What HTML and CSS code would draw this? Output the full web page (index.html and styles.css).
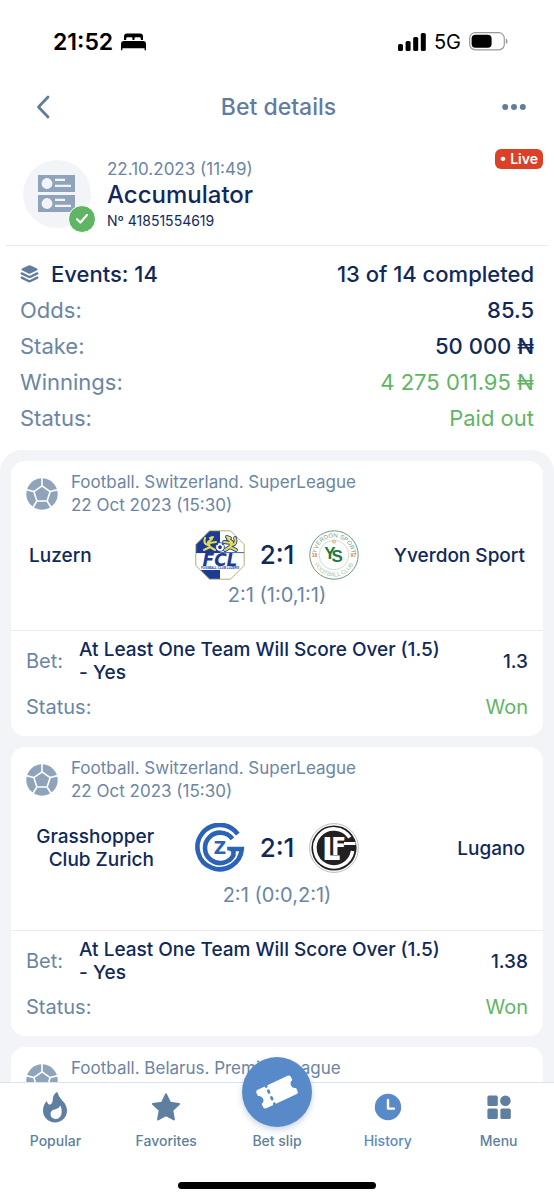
FILE: index.html
```html
<!DOCTYPE html>
<html lang="en">
<head>
  <meta charset="UTF-8" />
  <meta name="viewport" content="width=device-width, initial-scale=1.0" />
  <title>Bet details</title>
  <link rel="stylesheet" href="styles.css">
</head>
<body>
  <svg class="sprite" aria-hidden="true">
    <symbol id="ball" viewBox="0 0 32 32">
      <circle cx="16" cy="16" r="15.7" fill="#8fa4ba" />
      <g fill="none" stroke="#fff" stroke-width="1.6" stroke-linejoin="round">
        <path d="M16 7.8 24.2 13.6 21.1 23H10.9L7.8 13.6Z" />
        <path d="M16 7.8V0M24.2 13.6 32 11.6M21.1 23 25.4 30M10.9 23 6.6 30M7.8 13.6 0 11.6" />
      </g>
    </symbol>
  </svg>

  <div class="app">
    <div class="statusbar">
      <div class="statusbar-left">
        <span class="clock">21:52</span>
        <svg width="25" height="18" viewBox="0 0 25 18">
          <path d="M3 7V3.5A3 3 0 0 1 6 .5H19A3 3 0 0 1 22 3.5V7H19.8V5.6Q19.8 4.3 18.5 4.3H14.8Q13.5 4.3 13.5 5.6V7H11.5V5.6Q11.5 4.3 10.2 4.3H6.5Q5.2 4.3 5.2 5.6V7Z" />
          <path d="M3 8H22Q25 8 25 11V17.2H23.6V15.3H1.4V17.2H0V11Q0 8 3 8Z" />
        </svg>
      </div>
      <div class="statusbar-right">
        <svg width="28" height="18" viewBox="0 0 28 18">
          <rect x="0" y="11" width="5" height="7" rx="1.6" />
          <rect x="7.6" y="8" width="5" height="10" rx="1.6" />
          <rect x="15.2" y="4" width="5" height="14" rx="1.6" />
          <rect x="22.8" y="0" width="5" height="18" rx="1.6" />
        </svg>
        <span class="network">5G</span>
        <svg width="39" height="19" viewBox="0 0 39 19">
          <rect x=".7" y=".7" width="34.6" height="17.2" rx="5.6" fill="none" stroke="#999" stroke-width="1.2" />
          <rect x="2.6" y="2.8" width="20" height="13" rx="4" />
          <path d="M36.8 6.4Q38.6 7.2 38.6 9.2T36.8 12Z" fill="#999" />
        </svg>
      </div>
    </div>

    <header class="topbar">
      <button class="icon-btn" type="button" aria-label="Back">
        <svg width="14" height="24" viewBox="0 0 14 24"><path d="M12 2 2.5 12 12 22" fill="none" stroke="#5f7d9f" stroke-width="2.8" stroke-linecap="round" stroke-linejoin="round" /></svg>
      </button>
      <h1>Bet details</h1>
      <button class="icon-btn" type="button" aria-label="More">
        <svg width="24" height="6" viewBox="0 0 24 6" fill="#5f7d9f"><circle cx="3.2" cy="3" r="3" /><circle cx="12" cy="3" r="3" /><circle cx="20.8" cy="3" r="3" /></svg>
      </button>
    </header>

    <main>
      <section class="coupon">
        <div class="avatar">
          <svg width="38" height="38" viewBox="0 0 38 38">
            <path d="M0 0H37V17H0ZM0 20H37V37H0Z" fill="#8fa4ba" />
            <circle cx="9" cy="8.5" r="5.4" fill="#f3f4f8" />
            <circle cx="9" cy="28.5" r="5.4" fill="#f3f4f8" />
            <path d="M17 4.8H27M17 10.8H33M17 24.8H27M17 30.8H33" stroke="#f3f4f8" stroke-width="2.2" />
          </svg>
          <span class="check">
            <svg width="12" height="10" viewBox="0 0 12 10"><path d="M1 5.2 4.4 8.5 11 1" fill="none" stroke="#fff" stroke-width="2.2" stroke-linecap="round" stroke-linejoin="round" /></svg>
          </span>
        </div>
        <div class="coupon-text">
          <span class="coupon-date">22.10.2023 (11:49)</span>
          <h2>Accumulator</h2>
          <span class="coupon-number">Nº 41851554619</span>
        </div>
        <span class="live">• Live</span>
      </section>

      <dl class="totals">
        <div class="total total-events">
          <dt>
            <svg width="19" height="18" viewBox="0 0 18 18">
              <path d="M8 .4Q9 0 10 .4L16.5 3.5Q17.8 4.4 16.5 5.3L10 8.5Q9 9 8 8.5L1.5 5.3Q.2 4.4 1.5 3.5Z" fill="#5f7d9f" />
              <path d="M1.2 8.4 8 11.8Q9 12.2 10 11.8L16.8 8.4M1.2 12.6 8 16Q9 16.5 10 16L16.8 12.6" fill="none" stroke="#5f7d9f" stroke-width="2.3" stroke-linecap="round" />
            </svg>
            Events: 14
          </dt>
          <dd>13 of 14 completed</dd>
        </div>
        <div class="total"><dt>Odds:</dt><dd>85.5</dd></div>
        <div class="total"><dt>Stake:</dt><dd>50 000 ₦</dd></div>
        <div class="total"><dt>Winnings:</dt><dd class="good">4 275 011.95 ₦</dd></div>
        <div class="total"><dt>Status:</dt><dd class="good">Paid out</dd></div>
      </dl>

      <section class="events">
        <article class="card">
          <div class="league">
            <svg width="32" height="32"><use href="#ball" /></svg>
            <p>Football. Switzerland. SuperLeague<br>22 Oct 2023 (15:30)</p>
          </div>
          <div class="match">
            <span class="team home">Luzern</span>
            <svg class="logo" viewBox="0 0 50 50">
              <path d="M14.5 .8H35.5L49.2 14.5V35.5L35.5 49.2H14.5L.8 35.5V14.5Z" fill="#fff" />
              <path d="M14.5 1H25V23H1V14.5ZM5.5 40H25V49H14.5Z" fill="#1d3a94" />
              <path d="M14.5 .8H35.5L49.2 14.5V35.5L35.5 49.2H14.5L.8 35.5V14.5Z" fill="none" stroke="#a9a66a" stroke-width=".9" />
              <g fill="none" stroke="#1d3a94" stroke-width="3.8" stroke-linecap="round" stroke-linejoin="round">
                <path d="M41 20 35 17 37 12 33 9M35 17 30 20M36 13 29 12M37 15Q42 14 40 8M35 8 32 7" />
              </g>
              <g fill="none" stroke="#e3dc58" stroke-width="2.1" stroke-linecap="round" stroke-linejoin="round">
                <path d="M9 20 15 17 13 12 17 9M15 17 20 20M14 13 21 12M13 15Q8 14 10 8M15 8 18 7" />
                <path d="M41 20 35 17 37 12 33 9M35 17 30 20M36 13 29 12M37 15Q42 14 40 8M35 8 32 7" />
              </g>
              <circle cx="25" cy="17" r="4.4" fill="#fff" stroke="#1d3a94" stroke-width=".8" />
              <path d="M25 15 27 16.5 26.2 19H23.8L23 16.5ZM21.6 14 23.4 13.4 22.4 15.4ZM28.4 14 26.6 13.4 27.6 15.4Z" fill="#1d3a94" />
              <path d="M1 22.6H49" stroke="#1d3a94" stroke-width=".8" />
              <text x="25" y="35.6" class="fcl-name">FCL</text>
              <text x="25" y="39.4" class="fcl-sub">FUSSBALL CLUB LUZERN</text>
            </svg>
            <span class="score">2:1</span>
            <svg class="logo" viewBox="0 0 50 50">
              <defs>
                <path id="ring-top" d="M7.4 25A17.6 17.6 0 0 1 42.6 25" />
                <path id="ring-bottom" d="M3.4 25A21.6 21.6 0 0 0 46.6 25" />
              </defs>
              <circle cx="25" cy="25" r="24.2" fill="#fff" stroke="#5b9070" stroke-width=".9" />
              <circle cx="25" cy="25" r="14.8" fill="none" stroke="#b7cfc0" stroke-width=".7" />
              <text class="ring-text"><textPath href="#ring-top" startOffset="50%">YVERDON SPORT</textPath></text>
              <text class="ring-text ring-pale"><textPath href="#ring-bottom" startOffset="50%">FOOTBALL CLUB</textPath></text>
              <text x="5.6" y="27" class="ring-year">18</text>
              <text x="44.4" y="27" class="ring-year">97</text>
              <circle cx="25" cy="11.6" r="1.7" fill="#ead6b6" stroke="#c89a5c" stroke-width=".5" />
              <text x="24.6" y="29" class="yv-letters">Y<tspan dx="-4" dy="3">S</tspan></text>
            </svg>
            <span class="team away">Yverdon Sport</span>
          </div>
          <p class="periods">2:1 (1:0,1:1)</p>
          <dl class="bet">
            <div class="bet-row">
              <dt>Bet:</dt>
              <dd class="pick">At Least One Team Will Score Over (1.5) - Yes</dd>
              <dd class="odds">1.3</dd>
            </div>
            <div class="bet-row result"><dt>Status:</dt><dd class="won">Won</dd></div>
          </dl>
        </article>

        <article class="card">
          <div class="league">
            <svg width="32" height="32"><use href="#ball" /></svg>
            <p>Football. Switzerland. SuperLeague<br>22 Oct 2023 (15:30)</p>
          </div>
          <div class="match">
            <span class="team home">Grasshopper Club Zurich</span>
            <svg class="logo" viewBox="0 0 50 50">
              <g fill="none" stroke="#2b63b8" stroke-width="4.6">
                <path d="M42.8 11.2A22.2 22.2 0 1 0 46.8 26H34.5V27.5" />
                <path d="M37.4 15.8A15.2 15.2 0 1 0 38.4 32.4V26" />
              </g>
              <text x="24.8" y="31" class="gcz-letter">Z</text>
            </svg>
            <span class="score">2:1</span>
            <svg class="logo" viewBox="0 0 50 50">
              <circle cx="25" cy="25" r="24.4" fill="#fff" stroke="#aaa" stroke-width=".8" />
              <circle cx="25" cy="25" r="22.6" fill="#222021" />
              <path d="M40.8 14.6A19 19 0 1 0 43.6 28" fill="none" stroke="#fff" stroke-width="3.6" />
              <path d="M35 20.5H46.5" stroke="#fff" stroke-width="3" />
              <text x="25" y="37" class="lug-letters">L<tspan dx="-9" dy="-5" class="lug-small">F</tspan></text>
            </svg>
            <span class="team away">Lugano</span>
          </div>
          <p class="periods">2:1 (0:0,2:1)</p>
          <dl class="bet">
            <div class="bet-row">
              <dt>Bet:</dt>
              <dd class="pick">At Least One Team Will Score Over (1.5) - Yes</dd>
              <dd class="odds">1.38</dd>
            </div>
            <div class="bet-row result"><dt>Status:</dt><dd class="won">Won</dd></div>
          </dl>
        </article>

        <article class="card">
          <div class="league">
            <svg width="32" height="32"><use href="#ball" /></svg>
            <p>Football. Belarus. Premier League</p>
          </div>
        </article>
      </section>
    </main>

    <nav class="tabs">
      <a href="#popular">
        <svg width="24" height="32" viewBox="0 0 24 32">
          <path d="M14.2 .8Q15.2 5.2 19 9.2Q24 14 24 19.8A12 11.7 0 0 1 0 19.8Q0 13.8 3.8 10Q4.4 13.2 6.8 13.8Q9.8 12.4 9.8 8Q10 3.6 14.2 .8Z" fill="#5f7fa0" />
          <path d="M17.6 14.6Q20 22 17.2 25.8Q14.8 28.6 11.4 27.8Q7 26.4 7.6 22Q8.2 18.6 12.4 18.2Q16 17.6 17.6 14.6Z" fill="#fff" />
        </svg>
        Popular
      </a>
      <a href="#favorites">
        <svg width="30" height="32" viewBox="0 0 30 32"><path d="M15 3.4 19 11.8 28 13 21.3 19.4 22.9 28.4 15 24.1 7.1 28.4 8.7 19.4 2 13 11 11.8Z" fill="#5f7fa0" stroke="#5f7fa0" stroke-width="2" stroke-linejoin="round" /></svg>
        Favorites
      </a>
      <a href="#slip">
        <span class="slip-btn">
          <svg width="42" height="36" viewBox="0 0 42 36">
            <g transform="rotate(-25 21 18)">
              <path d="M4.5 7.8H37.5Q40 7.8 40 10.3V13.6A4.5 4.5 0 0 0 40 22.4V25.7Q40 28.2 37.5 28.2H4.5Q2 28.2 2 25.7V22.4A4.5 4.5 0 0 0 2 13.6V10.3Q2 7.8 4.5 7.8Z" fill="#fff" />
              <path d="M13.6 7.4V8.4M13.6 13.2V15M13.6 20.6V22.4M13.6 27.6V28.6" stroke="#588aca" stroke-width="2.8" stroke-linecap="round" />
            </g>
          </svg>
        </span>
        Bet slip
      </a>
      <a href="#history" class="active">
        <svg width="28" height="32" viewBox="0 0 28 32">
          <circle cx="14" cy="16" r="13.2" fill="#588aca" />
          <path d="M14 9V17.6H20" fill="none" stroke="#fff" stroke-width="2.4" stroke-linecap="round" stroke-linejoin="round" />
        </svg>
        History
      </a>
      <a href="#menu">
        <svg width="24" height="32" viewBox="0 0 24 32" fill="#5f7fa0">
          <rect x=".4" y="4.6" width="10.4" height="10.4" rx="1.6" />
          <circle cx="18.4" cy="9.8" r="5.3" />
          <rect x=".4" y="17.6" width="10.4" height="10.4" rx="1.6" />
          <rect x="13.4" y="17.6" width="10.4" height="10.4" rx="1.6" />
        </svg>
        Menu
      </a>
    </nav>
    <div class="home-indicator"></div>
  </div>
</body>
</html>
```
FILE: styles.css
```css
* {
  box-sizing: border-box;
}

body {
  margin: 0;
  background: #fff;
  font-family: Inter, 'Liberation Sans', sans-serif;
  font-size: 20px;
  line-height: 24px;
  color: #10295a;
}

h1, h2, p, dl, dd {
  margin: 0;
}

.sprite {
  position: absolute;
  width: 0;
  height: 0;
}

.app {
  display: flex;
  flex-direction: column;
  height: 100vh;
}

/* status bar */
.statusbar {
  display: flex;
  justify-content: space-between;
  align-items: center;
  height: 83px;
  padding: 0 46px 0 53px;
  color: #000;
  flex-shrink: 0;
}

.statusbar-left,
.statusbar-right {
  display: flex;
  align-items: center;
  gap: 8px;
}

.clock {
  font-size: 23px;
  font-weight: 600;
}

.network {
  font-size: 20px;
}

/* header */
.topbar {
  display: flex;
  justify-content: space-between;
  align-items: center;
  height: 48px;
  padding: 0 20px 0 23px;
  flex-shrink: 0;
}

.topbar h1 {
  font-size: 23px;
  font-weight: 500;
  color: #5f7d9f;
}

.icon-btn {
  display: flex;
  justify-content: center;
  align-items: center;
  width: 40px;
  height: 40px;
  padding: 0;
  border: none;
  background: none;
  cursor: pointer;
}

main {
  display: flex;
  flex-direction: column;
  flex: 1;
  min-height: 0;
  padding-top: 15px;
  overflow-y: auto;
  scrollbar-width: none;
}

/* coupon summary */
.coupon {
  display: flex;
  align-items: flex-start;
  gap: 16px;
  margin: 0 6px;
  padding: 0 5px 12px 17px;
  border-bottom: 1px solid #e9ebef;
}

.avatar {
  position: relative;
  display: flex;
  justify-content: center;
  align-items: center;
  width: 68px;
  height: 68px;
  margin-top: 14px;
  border-radius: 50%;
  background: #f3f4f8;
}

.check {
  position: absolute;
  right: -5px;
  bottom: -5px;
  display: flex;
  justify-content: center;
  align-items: center;
  width: 28px;
  height: 28px;
  border: 1px solid #fff;
  border-radius: 50%;
  background: #5fb563;
}

.coupon-text {
  display: flex;
  flex-direction: column;
  flex: 1;
  margin-top: 11px;
}

.coupon-date {
  font-size: 17px;
  color: #6b85a6;
}

.coupon h2 {
  font-size: 24px;
  line-height: 28px;
  font-weight: 500;
}

.coupon-number {
  font-size: 14px;
}

.live {
  margin-top: 3px;
  padding: 0 5px;
  border-radius: 6px;
  background: #dc4127;
  color: #fff;
  font-size: 14px;
  line-height: 20px;
  font-weight: 600;
}

.totals {
  padding: 10px 20px 14px;
}

.total {
  display: flex;
  justify-content: space-between;
  font-size: 22px;
  line-height: 36px;
}

.total dt {
  color: #6b85a6;
}

.total dd {
  font-weight: 500;
}

.total-events dt {
  display: flex;
  align-items: center;
  gap: 12px;
  font-weight: 500;
  color: #10295a;
}

.total .good {
  font-weight: 400;
  color: #5fb563;
}

/* events */
.events {
  display: flex;
  flex-direction: column;
  flex-shrink: 0;
  gap: 11px;
  padding: 11px;
  border-radius: 22px 22px 0 0;
  background: #f3f4f8;
}

.card {
  padding-top: 10px;
  border-radius: 14px;
  background: #fff;
}

.league {
  display: flex;
  align-items: center;
  gap: 13px;
  min-height: 46px;
  padding: 0 15px;
}

.league p {
  align-self: flex-start;
  font-size: 17px;
  line-height: 23px;
  color: #6b85a6;
}

.match {
  display: grid;
  grid-template-columns: 1fr 50px 64px 50px 1fr;
  align-items: center;
  min-height: 50px;
  margin-top: 13px;
  padding: 0 18px;
}

.team {
  padding: 9px 0;
  font-size: 19px;
  line-height: 23px;
  font-weight: 500;
}

.home {
  justify-self: start;
  max-width: 125px;
  text-align: right;
}

.away {
  justify-self: end;
  text-align: right;
}

.logo {
  width: 50px;
  height: 50px;
}

.score {
  font-size: 26px;
  font-weight: 500;
  text-align: center;
}

.periods {
  margin-top: 3px;
  padding-bottom: 23px;
  text-align: center;
  color: #6b85a6;
}

.bet {
  padding: 7px 15px 17px;
  border-top: 1px solid #e9ebef;
}

.bet-row {
  display: flex;
  align-items: center;
  line-height: 23px;
}

.bet-row dt {
  color: #6b85a6;
}

.pick {
  width: 374px;
  margin-left: 16px;
  font-size: 19px;
  font-weight: 500;
}

.odds,
.won {
  margin-left: auto;
  font-size: 19px;
  font-weight: 500;
}

.result {
  margin-top: 11px;
  line-height: 24px;
}

.won {
  font-size: 20px;
  font-weight: 400;
  color: #5fb563;
}

/* bottom navigation */
.tabs {
  position: relative;
  display: grid;
  grid-template-columns: repeat(5, 1fr);
  flex-shrink: 0;
  padding-top: 8px;
  border-top: 1px solid #dbe4ee;
  background: #fff;
}

.tabs a {
  display: flex;
  flex-direction: column;
  align-items: center;
  gap: 8px;
  font-size: 14px;
  line-height: 20px;
  font-weight: 500;
  color: #5f7fa0;
  text-decoration: none;
}

.tabs .active {
  color: #588aca;
}

/* round button sticks out above the bar */
.slip-btn {
  display: flex;
  justify-content: center;
  align-items: center;
  width: 70px;
  height: 70px;
  margin-top: -34px;
  margin-bottom: -4px;
  border-radius: 50%;
  background: #588aca;
  box-shadow: 0 3px 6px rgba(60, 90, 140, 0.25);
}

.home-indicator {
  width: 198px;
  height: 7px;
  margin: 31px auto 11px;
  border-radius: 4px;
  background: #000;
  flex-shrink: 0;
}

/* club logos */
.logo text {
  font-family: 'Liberation Sans', sans-serif;
  font-weight: 700;
  text-anchor: middle;
}

.logo .fcl-name {
  font-family: 'DejaVu Sans', sans-serif;
  font-size: 17px;
  font-style: italic;
  fill: #1d3a94;
}

.logo .fcl-sub {
  font-size: 3px;
  font-style: italic;
  fill: #1d3a94;
}

.logo .ring-text {
  font-size: 6px;
  font-weight: 400;
  fill: #6f9f82;
}

.logo .ring-pale {
  fill: #a9c7b5;
}

.logo .ring-year {
  font-size: 5px;
  fill: #c4825c;
}

.logo .yv-letters {
  font-size: 17px;
  fill: #1f7a40;
}

.logo .gcz-letter {
  font-family: 'DejaVu Sans', sans-serif;
  font-size: 17px;
  fill: #2b63b8;
}

.logo .lug-letters {
  font-family: 'DejaVu Sans Condensed', 'DejaVu Sans', sans-serif;
  font-size: 32px;
  fill: #fff;
}

.logo .lug-small {
  font-size: 24px;
}
```
